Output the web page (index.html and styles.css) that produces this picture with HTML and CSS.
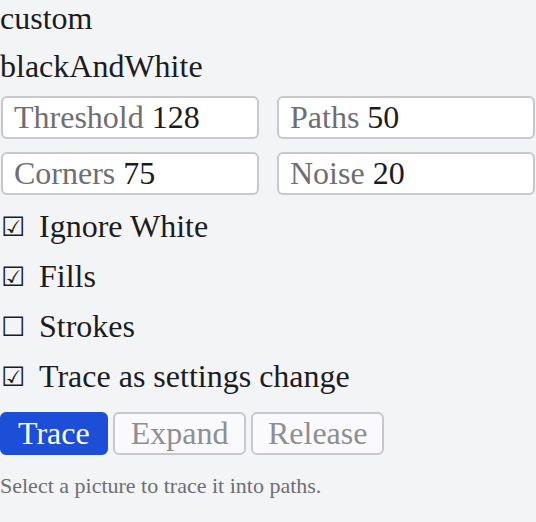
FILE: index.html
```html
<!DOCTYPE html>
<html lang="en">
<head>
<meta charset="utf-8">
<title>Trace</title>
<link rel="stylesheet" href="styles.css">
</head>
<body>
<div class="panel">
  <div class="line">custom</div>
  <div class="line">blackAndWhite</div>
  <div class="fields">
    <div class="field"><span class="label">Threshold</span> <span class="value">128</span></div>
    <div class="field"><span class="label">Paths</span> <span class="value">50</span></div>
    <div class="field"><span class="label">Corners</span> <span class="value">75</span></div>
    <div class="field"><span class="label">Noise</span> <span class="value">20</span></div>
  </div>
  <div class="checks">
    <div class="check"><span class="box">☑</span><span class="text">Ignore White</span></div>
    <div class="check"><span class="box">☑</span><span class="text">Fills</span></div>
    <div class="check"><span class="box">☐</span><span class="text">Strokes</span></div>
    <div class="check"><span class="box">☑</span><span class="text">Trace as settings change</span></div>
  </div>
  <div class="actions">
    <button class="btn primary" type="button">Trace</button>
    <button class="btn" type="button" disabled>Expand</button>
    <button class="btn btn-narrow" type="button" disabled>Release</button>
  </div>
  <p class="hint">Select a picture to trace it into paths.</p>
</div>
</body>
</html>
```

FILE: styles.css
```css
html, body {
  margin: 0;
  padding: 0;
  background: #f3f4f6;
}

body {
  font-family: "Liberation Serif", "Times New Roman", serif;
  font-size: 32px;
  color: #1c1c1e;
}

.panel {
  display: flex;
  flex-direction: column;
  gap: 12px;
  width: 536px;
}

.line {
  line-height: 36px;
  height: 36px;
}

.fields {
  display: grid;
  grid-template-columns: 1fr 1fr;
  column-gap: 16px;
  row-gap: 13px;
}

.field {
  margin: 0 1px;
  background: #ffffff;
  border: 2px solid #c8c8cc;
  border-radius: 6px;
  padding: 1px 11px;
  line-height: 37px;
  white-space: nowrap;
}

.label {
  color: #6e6e73;
}

.value {
  color: #1c1c1e;
}

.checks {
  display: flex;
  flex-direction: column;
  gap: 12px;
}

.check {
  display: flex;
  align-items: center;
  height: 38px;
  line-height: 38px;
}

.box {
  width: 39px;
  flex: none;
  font-family: "DejaVu Sans", sans-serif;
  font-size: 27px;
  padding-left: 1px;
  padding-top: 2px;
  box-sizing: border-box;
  color: #1c1c1e;
}

.actions {
  display: flex;
  gap: 5px;
  margin-top: 5px;
}

.btn {
  font-family: "Liberation Serif", "Times New Roman", serif;
  font-size: 32px;
  line-height: 37px;
  padding: 1px 16px;
  border: 2px solid #c8c8cc;
  border-radius: 6px;
  background: #fafafc;
  color: #8e8e93;
  margin: 0;
}

.btn-narrow {
  padding: 1px 14.5px;
}

.btn.primary {
  background: #1d4ed8;
  border-color: #1d4ed8;
  color: #ffffff;
}

.hint {
  margin: 6px 0 0;
  font-size: 22px;
  color: #6e6e73;
}
```
